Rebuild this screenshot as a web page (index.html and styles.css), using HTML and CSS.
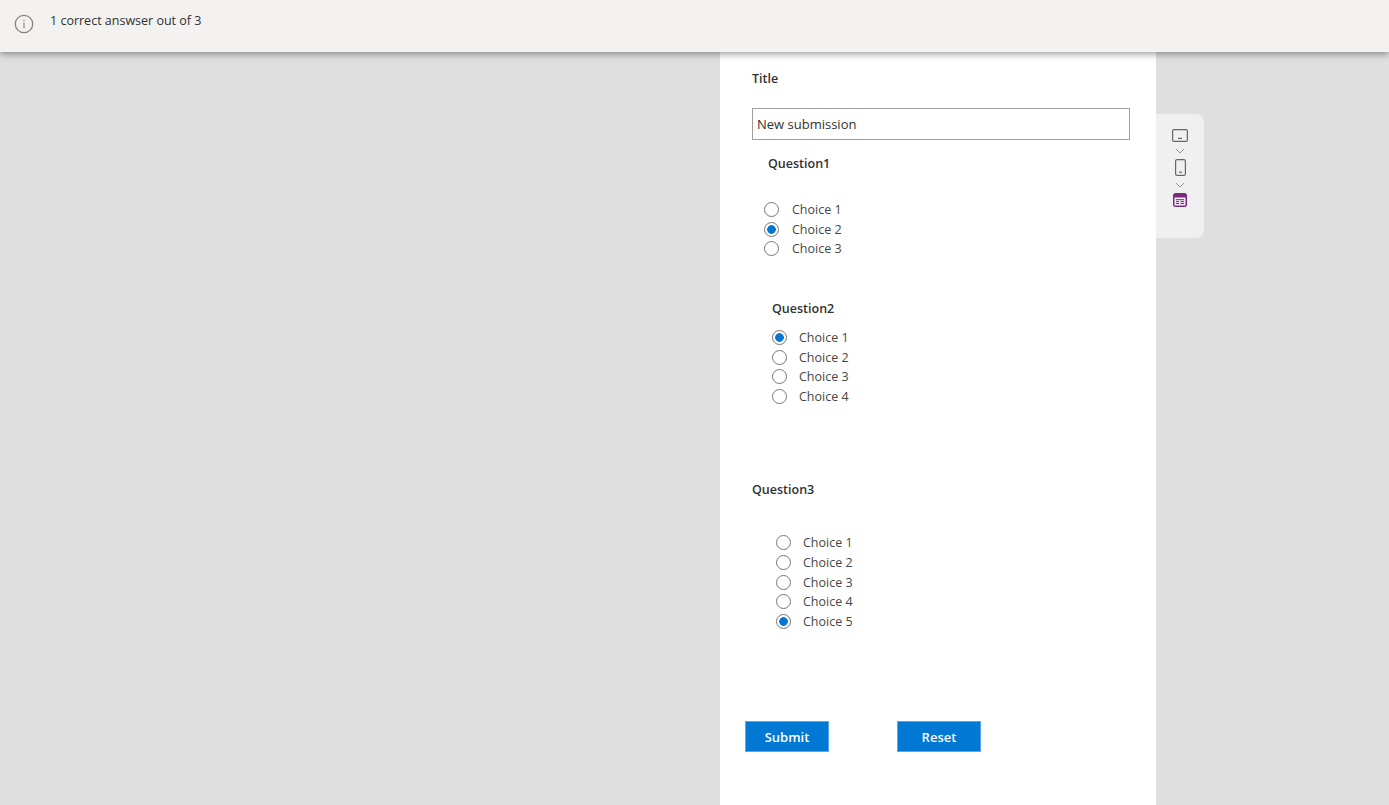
FILE: index.html
```html
<!DOCTYPE html>
<html lang="en">
	<head>
		<meta charset="utf-8">
		<title>index</title>
		<link rel="stylesheet" href="styles.css">
	</head>
	<body>
		<div class="notice">
			<svg class="notice-icon" width="20" height="20" viewBox="0 0 20 20">
				<circle cx="10" cy="10" r="8.7" fill="none" stroke="#858585" stroke-width="1.3"/>
				<rect x="9.4" y="8.6" width="1.2" height="5.6" fill="#858585"/>
				<rect x="9.4" y="5.8" width="1.2" height="1.4" fill="#858585"/>
			</svg>
			<span class="notice-text">1 correct answser out of 3</span>
		</div>
		<div class="stage">
			<form class="card">
				<label class="title-label" for="title">Title</label>
				<input class="title-input" id="title" type="text" value="New submission">

				<div class="question q1">
					<div class="q-label">Question1</div>
					<div class="choices">
						<label class="choice"><input type="radio" name="q1"><span>Choice 1</span></label>
						<label class="choice"><input type="radio" name="q1" checked><span>Choice 2</span></label>
						<label class="choice"><input type="radio" name="q1"><span>Choice 3</span></label>
					</div>
				</div>

				<div class="question q2">
					<div class="q-label">Question2</div>
					<div class="choices">
						<label class="choice"><input type="radio" name="q2" checked><span>Choice 1</span></label>
						<label class="choice"><input type="radio" name="q2"><span>Choice 2</span></label>
						<label class="choice"><input type="radio" name="q2"><span>Choice 3</span></label>
						<label class="choice"><input type="radio" name="q2"><span>Choice 4</span></label>
					</div>
				</div>

				<div class="question q3">
					<div class="q-label">Question3</div>
					<div class="choices">
						<label class="choice"><input type="radio" name="q3"><span>Choice 1</span></label>
						<label class="choice"><input type="radio" name="q3"><span>Choice 2</span></label>
						<label class="choice"><input type="radio" name="q3"><span>Choice 3</span></label>
						<label class="choice"><input type="radio" name="q3"><span>Choice 4</span></label>
						<label class="choice"><input type="radio" name="q3" checked><span>Choice 5</span></label>
					</div>
				</div>

				<div class="actions">
					<button class="btn" type="button">Submit</button>
					<button class="btn" type="button">Reset</button>
				</div>
			</form>
			<div class="rail">
				<svg width="16" height="13" viewBox="0 0 16 13">
					<rect x="0.6" y="0.6" width="14.8" height="11.8" rx="1.5" fill="none" stroke="#666" stroke-width="1.2"/>
					<rect x="6" y="8.8" width="4" height="1.2" fill="#666"/>
				</svg>
				<svg class="chev" width="10" height="6" viewBox="0 0 10 6">
					<path d="M1 1l4 4 4-4" fill="none" stroke="#999" stroke-width="1"/>
				</svg>
				<svg width="11" height="17" viewBox="0 0 11 17">
					<rect x="0.6" y="0.6" width="9.8" height="15.8" rx="1.5" fill="none" stroke="#666" stroke-width="1.2"/>
					<rect x="4" y="12.6" width="3" height="1.2" fill="#666"/>
				</svg>
				<svg class="chev" width="10" height="6" viewBox="0 0 10 6">
					<path d="M1 1l4 4 4-4" fill="none" stroke="#999" stroke-width="1"/>
				</svg>
				<svg width="14" height="14" viewBox="0 0 14 14">
					<rect width="14" height="14" rx="2.5" fill="#7a2a80"/>
					<rect x="1.5" y="4.5" width="11" height="8" fill="#f3e9f4"/>
					<path d="M3 6.7h8M3 8.6h3M7.5 8.6H11M3 10.5h3M7.5 10.5H11" stroke="#7a2a80" stroke-width="1"/>
				</svg>
			</div>
		</div>
	</body>
</html>
```
FILE: styles.css
```css
*{margin:0;padding:0;box-sizing:border-box;}
html,body{height:100%;overflow:hidden;}
body{
	display:flex;
	flex-direction:column;
	background:#dfdfdf;
	font-family:"Open Sans","Noto Sans",sans-serif;
	color:#323130;
}
.notice{
	position:relative;
	z-index:1;
	flex:none;
	display:flex;
	align-items:flex-start;
	height:52px;
	padding:14px 0 0 14px;
	background:#f3f2f1;
	box-shadow:0 2px 7px rgba(0,0,0,.4);
}
.notice-icon{flex:none;}
.notice-text{
	margin-left:16px;
	font-size:12.5px;
	line-height:14px;
}
.stage{
	flex:1;
	display:flex;
	align-items:flex-start;
	padding-left:720px;
}
.card{
	width:436px;
	height:753px;
	padding:18px 26px 0 32px;
	background:#fff;
}
.title-label{
	display:block;
	font-size:12.5px;
	font-weight:600;
	line-height:18px;
}
.title-input{
	display:block;
	width:378px;
	height:32px;
	margin-top:20px;
	padding:0 4px;
	border:1px solid #a19f9d;
	background:#fff;
	font:13px "Open Sans","Noto Sans",sans-serif;
	color:#323130;
	outline:none;
}
.q-label{
	font-size:12.5px;
	font-weight:600;
	line-height:18px;
}
.choices{display:flex;flex-direction:column;}
.choice{
	display:flex;
	align-items:center;
	height:19.6px;
	font-size:12.5px;
	color:#484644;
}
.choice input{
	flex:none;
	appearance:none;
	width:15px;
	height:15px;
	margin-right:13px;
	border:1px solid #767676;
	border-radius:50%;
	background:#fff;
}
.choice input:checked{
	background:radial-gradient(circle,#0078d4 0 4px,#fff 4.6px);
}
.q1{margin-top:15px;padding-left:16px;}
.q1 .choices{margin-top:27px;margin-left:-4px;}
.q2{margin-top:41px;padding-left:20px;}
.q2 .choices{margin-top:10px;}
.q2 .choice input{margin-right:12px;}
.q3{margin-top:75px;}
.q3 .choices{margin-top:34px;margin-left:24px;}
.q3 .choice input{margin-right:12px;}
.actions{
	display:flex;
	gap:68px;
	margin:90px 0 0 -7px;
}
.btn{
	width:84px;
	height:31px;
	border:1px solid #5aa7e6;
	background:#0078d4;
	color:#fff;
	font:600 13px "Open Sans","Noto Sans",sans-serif;
}
.rail{
	display:flex;
	flex-direction:column;
	align-items:center;
	width:48px;
	height:124px;
	margin-top:62px;
	padding-top:15px;
	background:#f0f0f0;
	border-radius:0 8px 8px 0;
}
.chev{margin:6px 0 5px;}
```
